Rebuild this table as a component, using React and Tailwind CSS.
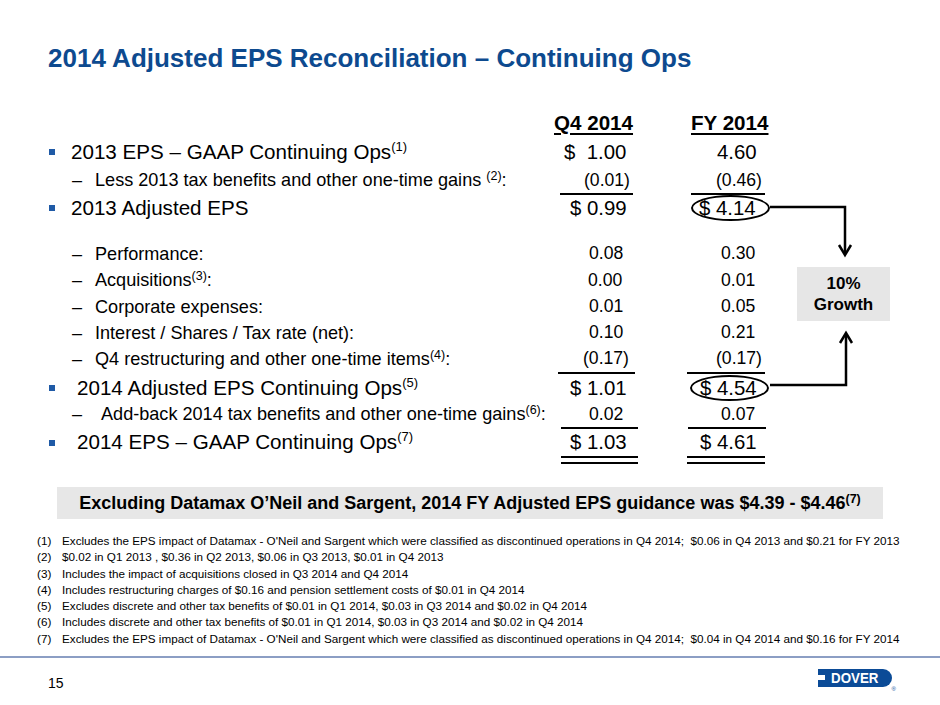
import React from "react";

function Sup({ children, small }) {
  return (
    <sup className={small ? "relative -top-[6px] text-[12.5px] leading-none" : "relative -top-[8px] text-[13px] leading-none"}>
      {children}
    </sup>
  );
}

function Bullet() {
  return <span className="inline-block w-[6px] h-[6px] bg-[#1f5aa6] shrink-0" />;
}

function MainLabel({ gap, children }) {
  return (
    <div className="w-[552px] flex items-center pl-[49px] text-[20.6px] leading-none">
      <Bullet />
      <span className={gap}>{children}</span>
    </div>
  );
}

function SubLabel({ dashW, children }) {
  return (
    <div className="w-[552px] flex items-center pl-[72px] text-[18.1px] leading-none">
      <span className={"inline-block shrink-0 " + dashW}>–</span>
      <span>{children}</span>
    </div>
  );
}

function Cells({ q4, fy, q4pl, fypl, big, ellipse }) {
  const size = big ? "text-[20.4px]" : "text-[17.6px]";
  return (
    <>
      <div className={"w-[90px] whitespace-pre leading-none " + size + " " + q4pl}>{q4}</div>
      <div className="w-[42px]" />
      <div className={"relative w-[86px] whitespace-pre leading-none " + size + " " + fypl}>
        {fy}
        {ellipse ? (
          <span className={"absolute w-[79px] h-[26px] border-2 border-black rounded-[50%] " + ellipse} />
        ) : null}
      </div>
    </>
  );
}

function Line({ q4, fy }) {
  return (
    <div className="flex h-[2px]">
      <div className="w-[552px]" />
      <div className="w-[90px]">
        <div className={"h-[2px] bg-black " + q4} />
      </div>
      <div className="w-[42px]" />
      <div className="w-[86px]">
        <div className={"h-[2px] bg-black " + fy} />
      </div>
    </div>
  );
}

const notes = [
  "Excludes the EPS impact of Datamax - O'Neil and Sargent which were classified as discontinued operations in Q4 2014;  $0.06 in Q4 2013 and $0.21 for FY 2013",
  "$0.02 in Q1 2013 , $0.36 in Q2 2013, $0.06 in Q3 2013, $0.01 in Q4 2013",
  "Includes the impact of acquisitions closed in Q3 2014 and Q4 2014",
  "Includes restructuring charges of $0.16 and pension settlement costs of $0.01 in Q4 2014",
  "Excludes discrete and other tax benefits of $0.01 in Q1 2014, $0.03 in Q3 2014 and $0.02 in Q4 2014",
  "Includes discrete and other tax benefits of $0.01 in Q1 2014, $0.03 in Q3 2014 and $0.02 in Q4 2014",
  "Excludes the EPS impact of Datamax - O'Neil and Sargent which were classified as discontinued operations in Q4 2014;  $0.04 in Q4 2014 and $0.16 for FY 2014",
];

export default function App() {
  return (
    <div className="relative w-[940px] h-[705px] overflow-hidden bg-white text-black font-['Liberation_Sans',Arial,sans-serif]">
      <h1 className="pt-[43px] pl-[48px] text-[26px] leading-[30px] font-bold text-[#0d4a8f]">
        2014 Adjusted EPS Reconciliation – Continuing Ops
      </h1>

      <div className="mt-[37px] flex">
        <div className="flex flex-col">
          <div className="flex items-center h-[26px]">
            <div className="w-[552px]" />
            <div className="w-[90px] pl-[2px] text-[20.6px] leading-none font-bold underline decoration-2 underline-offset-[3px]">
              Q4 2014
            </div>
            <div className="w-[42px]" />
            <div className="w-[86px] pl-[7px] text-[20.6px] leading-none font-bold underline decoration-2 underline-offset-[3px]">
              FY 2014
            </div>
          </div>

          <div className="flex items-center h-[32px]">
            <MainLabel gap="ml-[16px]">
              2013 EPS – GAAP Continuing Ops<Sup>(1)</Sup>
            </MainLabel>
            <Cells big q4={"$  1.00"} fy="4.60" q4pl="pl-[12px]" fypl="pl-[33px]" />
          </div>

          <div className="flex items-center h-[25px]">
            <SubLabel dashW="w-[23px]">
              Less 2013 tax benefits and other one-time gains <Sup small>(2)</Sup>:
            </SubLabel>
            <Cells q4="(0.01)" fy="(0.46)" q4pl="pl-[32px]" fypl="pl-[32px]" />
          </div>

          <Line q4="ml-[8px] w-[73px]" fy="ml-[7px] w-[74px]" />

          <div className="flex items-center h-[26px]">
            <MainLabel gap="ml-[16px]">2013 Adjusted EPS</MainLabel>
            <Cells big q4="$ 0.99" fy="$ 4.14" q4pl="pl-[18px]" fypl="pl-[15px]" ellipse="left-[7px] -top-[3px]" />
          </div>

          <div className="h-[20px]" />

          <div className="flex items-center h-[26px]">
            <SubLabel dashW="w-[23px]">Performance:</SubLabel>
            <Cells q4="0.08" fy="0.30" q4pl="pl-[37px]" fypl="pl-[37px]" />
          </div>
          <div className="flex items-center h-[27px]">
            <SubLabel dashW="w-[23px]">
              Acquisitions<Sup small>(3)</Sup>:
            </SubLabel>
            <Cells q4="0.00" fy="0.01" q4pl="pl-[36px]" fypl="pl-[37px]" />
          </div>
          <div className="flex items-center h-[26px]">
            <SubLabel dashW="w-[23px]">Corporate expenses:</SubLabel>
            <Cells q4="0.01" fy="0.05" q4pl="pl-[37px]" fypl="pl-[37px]" />
          </div>
          <div className="flex items-center h-[26px]">
            <SubLabel dashW="w-[23px]">Interest / Shares / Tax rate (net):</SubLabel>
            <Cells q4="0.10" fy="0.21" q4pl="pl-[37px]" fypl="pl-[37px]" />
          </div>
          <div className="flex items-center h-[26px]">
            <SubLabel dashW="w-[23px]">
              Q4 restructuring and other one-time items<Sup small>(4)</Sup>:
            </SubLabel>
            <Cells q4="(0.17)" fy="(0.17)" q4pl="pl-[31px]" fypl="pl-[32px]" />
          </div>

          <Line q4="ml-[6px] w-[77px]" fy="ml-[3px] w-[78px]" />

          <div className="flex items-center h-[28px]">
            <MainLabel gap="ml-[22px]">
              2014 Adjusted EPS Continuing Ops<Sup>(5)</Sup>
            </MainLabel>
            <Cells big q4="$ 1.01" fy="$ 4.54" q4pl="pl-[18px]" fypl="pl-[16px]" ellipse="left-[6px] -top-[3px]" />
          </div>

          <div className="flex items-center h-[25px]">
            <SubLabel dashW="w-[29px]">
              Add-back 2014 tax benefits and other one-time gains<Sup small>(6)</Sup>:
            </SubLabel>
            <Cells q4="0.02" fy="0.07" q4pl="pl-[37px]" fypl="pl-[37px]" />
          </div>

          <Line q4="ml-[9px] w-[77px]" fy="ml-[4px] w-[78px]" />

          <div className="flex items-center h-[27px]">
            <MainLabel gap="ml-[22px]">
              2014 EPS – GAAP Continuing Ops<Sup>(7)</Sup>
            </MainLabel>
            <Cells big q4="$ 1.03" fy="$ 4.61" q4pl="pl-[18px]" fypl="pl-[16px]" />
          </div>

          <Line q4="ml-[9px] w-[77px]" fy="ml-[3px] w-[78px]" />
          <div className="h-[4px]" />
          <Line q4="ml-[9px] w-[77px]" fy="ml-[3px] w-[78px]" />
        </div>

        <div className="ml-[27px] mt-[157px]">
          <div className="w-[93px] h-[54px] bg-[#e6e6e6] flex flex-col items-center justify-center text-[17px] leading-[21px] font-bold">
            <span>10%</span>
            <span>Growth</span>
          </div>
        </div>
      </div>

      <div className="mt-[23px] mx-[57px] h-[32px] bg-[#e7e7e7] flex items-center justify-center text-[18px] font-bold leading-none">
        <span>
          Excluding Datamax O’Neil and Sargent, 2014 FY Adjusted EPS guidance was $4.39 - $4.46
          <Sup small>(7)</Sup>
        </span>
      </div>

      <ol className="mt-[14px] pl-[37px] text-[11.7px] leading-[16.3px]">
        {notes.map((n, i) => (
          <li key={i} className="flex">
            <span className="w-[25px] shrink-0">({i + 1})</span>
            <span className="whitespace-pre">{n}</span>
          </li>
        ))}
      </ol>

      <div className="mt-[9px] h-[2px] bg-[#8c9ec4]" />

      <div className="flex justify-between items-start">
        <div className="ml-[48px] mt-[17px] text-[14px] leading-[16px]">15</div>
        <div className="mr-[44px] mt-[11px] flex items-start">
          <div className="relative w-[74px] h-[18px] bg-[#0b4b97] rounded-r-full flex items-center">
            <span className="absolute left-0 top-[6px] w-[7px] h-[5px] bg-white" />
            <span className="ml-[13px] inline-block origin-left scale-x-[0.86] text-white font-bold text-[15.5px] leading-none">
              DOVER
            </span>
          </div>
          <span className="mt-[17px] text-[6px] leading-none text-[#0b4b97]">®</span>
        </div>
      </div>

      <svg
        className="absolute left-[760px] top-[195px] w-[100px] h-[200px]"
        viewBox="0 0 100 200"
        fill="none"
        stroke="black"
        strokeWidth="2.5"
      >
        <path d="M10 12 H85 V59" />
        <path d="M79 50 L85 60 L91 50" />
        <path d="M10 190 H86 V139" />
        <path d="M80 148 L86 138 L92 148" />
      </svg>
    </div>
  );
}
